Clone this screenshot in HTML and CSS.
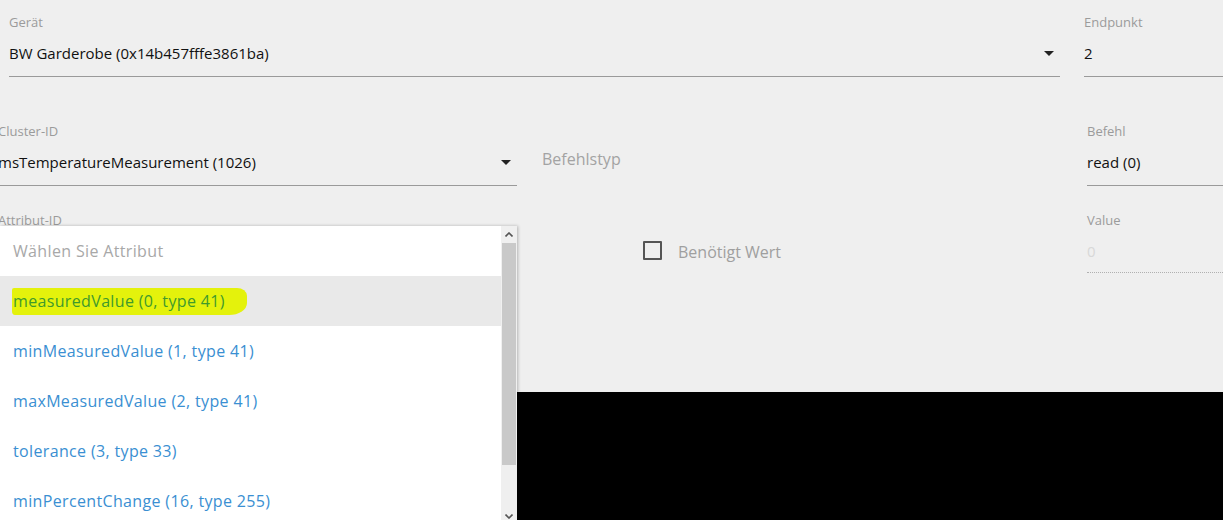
FILE: index.html
```html
<!DOCTYPE html>
<html lang="de">
<head>
<meta charset="utf-8">
<link rel="stylesheet" href="styles.css">
</head>
<body>
<div class="page">
  <div class="row row1">
    <div class="field f-device">
      <div class="label">Gerät</div>
      <div class="select"><span class="value">BW Garderobe (0x14b457fffe3861ba)</span><span class="caret"></span></div>
    </div>
    <div class="field f-endpoint">
      <div class="label">Endpunkt</div>
      <div class="select"><span class="value">2</span></div>
    </div>
  </div>

  <div class="row row2">
    <div class="field f-cluster">
      <div class="label">Cluster-ID</div>
      <div class="select"><span class="value">msTemperatureMeasurement (1026)</span><span class="caret"></span></div>
    </div>
    <div class="cmdtype">Befehlstyp</div>
    <div class="field f-right">
      <div class="label">Befehl</div>
      <div class="select"><span class="value">read (0)</span></div>
    </div>
  </div>

  <div class="row row3">
    <div class="field f-cluster">
      <div class="label">Attribut-ID</div>
    </div>
    <div class="check">
      <span class="box"></span>
      <span class="check-label">Benötigt Wert</span>
    </div>
    <div class="field f-right">
      <div class="label">Value</div>
      <div class="select dotted"><span class="value disabled">0</span></div>
    </div>
  </div>

  <div class="black"></div>

  <div class="dropdown">
    <ul class="list">
      <li class="item placeholder">Wählen Sie Attribut</li>
      <li class="item active"><span class="mark">measuredValue (0, type 41)</span></li>
      <li class="item">minMeasuredValue (1, type 41)</li>
      <li class="item">maxMeasuredValue (2, type 41)</li>
      <li class="item">tolerance (3, type 33)</li>
      <li class="item">minPercentChange (16, type 255)</li>
    </ul>
    <div class="scrollbar">
      <div class="sb-btn up"><svg width="8" height="5" viewBox="0 0 8 5"><path d="M0.5 4.5 L4 1 L7.5 4.5" fill="none" stroke="#555" stroke-width="1.6"/></svg></div>
      <div class="sb-thumb"></div>
      <div class="sb-track"></div>
      <div class="sb-btn down"><svg width="8" height="5" viewBox="0 0 8 5"><path d="M0.5 0.5 L4 4 L7.5 0.5" fill="none" stroke="#555" stroke-width="1.6"/></svg></div>
    </div>
  </div>
</div>
</body>
</html>
```

FILE: styles.css
```css
* { box-sizing: border-box; }
html, body { margin: 0; padding: 0; }
body {
  background: #efefef;
  font-family: "Open Sans", "Noto Sans", "DejaVu Sans", sans-serif;
}
.page {
  position: relative;
  width: 1223px;
  height: 520px;
  overflow: hidden;
  background: #efefef;
}
.row {
  display: flex;
  align-items: flex-start;
}
.row1 { padding-top: 14px; padding-left: 9px; }
.row2 { padding-top: 46px; }
.row3 { padding-top: 26px; height: 206px; }

.field { flex: none; }
.label {
  font-size: 13px;
  line-height: 16px;
  color: #9b9b9b;
  white-space: nowrap;
}
.select {
  position: relative;
  height: 47px;
  padding-top: 13px;
  border-bottom: 1px solid #9a9a9a;
  display: flex;
  align-items: flex-start;
}
.select.dotted { border-bottom: 1px dotted #b0b0b0; height: 45px; }
.value {
  font-size: 15px;
  line-height: 20px;
  color: #111;
  white-space: nowrap;
}
.value.disabled { color: #d8d8d8; }
.caret {
  margin-left: auto;
  margin-right: 6px;
  margin-top: 8px;
  width: 0; height: 0;
  border-left: 5px solid transparent;
  border-right: 5px solid transparent;
  border-top: 5px solid #222;
}
.f-device { width: 1051px; }
.f-endpoint { width: 150px; margin-left: 24px; }
.f-cluster { width: 519px; margin-left: -2px; }
.f-right { width: 140px; margin-left: auto; margin-right: -4px; }

.cmdtype {
  margin-left: 25px;
  margin-top: 26px;
  font-size: 16px;
  line-height: 20px;
  color: #a3a3a3;
}
.check {
  display: flex;
  align-items: center;
  margin-left: 126px;
  margin-top: 26px;
}
.box {
  width: 19px; height: 19px;
  border: 2px solid #555;
  border-radius: 1px;
}
.check-label {
  margin-left: 16px;
  margin-top: 4px;
  font-size: 16px;
  color: #9f9f9f;
  line-height: 20px;
}

.black {
  height: 128px;
  background: #000;
}

.dropdown {
  position: absolute;
  left: 0;
  top: 226px;
  width: 517px;
  height: 300px;
  background: #fff;
  display: flex;
  box-shadow: 1px 0 3px rgba(0,0,0,0.25);
}
.list {
  list-style: none;
  margin: 0;
  padding: 0;
  width: 501px;
}
.item {
  height: 50px;
  padding-left: 13px;
  display: flex;
  align-items: center;
  font-size: 16px;
  letter-spacing: 0.35px;
  color: #3a8fd2;
  white-space: nowrap;
}
.item.placeholder { color: #a8a8a8; }
.item.active { background: #e9e9e9; }
.mark {
  margin-left: -1px;
  padding: 2px 22px 3px 1px;
  background: #e4f20c;
  color: #3f9a2c;
  border-radius: 2px 10px 18px 3px / 2px 8px 12px 4px;
}
.scrollbar {
  width: 16px;
  display: flex;
  flex-direction: column;
  background: #f0f0f0;
}
.sb-btn {
  height: 17px;
  display: flex;
  align-items: center;
  justify-content: center;
  flex: none;
}
.sb-btn.down { height: 16px; align-items: flex-start; padding-top: 4px; }
.sb-thumb { height: 222px; background: #c9c9c9; flex: none; margin: 0 1px; }
.sb-track { flex: 1; background: #efefef; }
```
